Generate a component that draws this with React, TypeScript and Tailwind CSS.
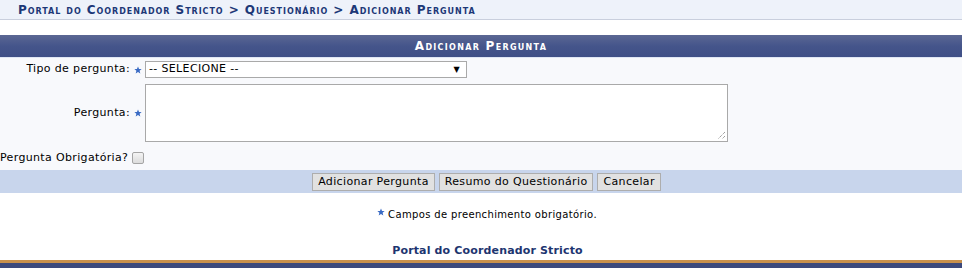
import React from "react";

const Star = () => (
  <svg width="8" height="8" viewBox="0 0 10 10" className="inline-block">
    <polygon
      points="5,0.5 6.3,3.6 9.6,3.8 7,6 7.9,9.4 5,7.5 2.1,9.4 3,6 0.4,3.8 3.7,3.6"
      fill="#3a6bc4"
    />
  </svg>
);

export default function App() {
  return (
    <div
      className="w-[962px] h-[268px] overflow-hidden bg-white text-[11px] text-black flex flex-col tracking-[0.35px]"
      style={{ fontFamily: '"DejaVu Sans", Verdana, sans-serif' }}
    >
      {/* Breadcrumb */}
      <div className="h-[20px] bg-[#eef2fa] border-b border-[#c9cfdd] flex items-center pl-[18px]">
        <span className="font-bold text-[12px] text-[#1d3877] [font-variant:small-caps] tracking-[0.95px]">
          Portal do Coordenador Stricto &gt; Questionário &gt; Adicionar Pergunta
        </span>
      </div>

      <div className="h-[15px]" />

      {/* Header */}
      <div className="h-[22px] bg-gradient-to-b from-[#5b6793] via-[#45558b] to-[#3f4f86] flex items-center justify-center">
        <span className="font-bold text-white text-[12px] [font-variant:small-caps] tracking-[1.3px]">
          Adicionar Pergunta
        </span>
      </div>
      <div className="h-[1px] bg-[#dfe6f4]" />

      {/* Form */}
      <div className="bg-[#f8f9fc] flex flex-col pt-[3px]">
        <div className="flex items-center h-[17px]">
          <div className="w-[145px] flex items-center justify-end pr-[3px] gap-[4px]">
            <span>Tipo de pergunta:</span>
            <Star />
          </div>
          <div className="w-[322px] h-[17px] bg-white border border-[#a9a9a9] flex items-center justify-between pl-[3px] pr-[6px]">
            <span>-- SELECIONE --</span>
            <span className="text-[8px]">▼</span>
          </div>
        </div>

        <div className="flex items-center h-[58px] mt-[6px]">
          <div className="w-[145px] flex items-center justify-end pr-[3px] gap-[4px]">
            <span>Pergunta:</span>
            <Star />
          </div>
          <div className="w-[583px] h-[58px] bg-white border border-[#a9a9a9] relative">
            <svg
              width="9"
              height="9"
              viewBox="0 0 9 9"
              className="absolute right-[1px] bottom-[1px]"
            >
              <line x1="8" y1="1" x2="1" y2="8" stroke="#777" strokeWidth="1" strokeDasharray="1 1" />
              <line x1="8" y1="5" x2="5" y2="8" stroke="#777" strokeWidth="1" strokeDasharray="1 1" />
            </svg>
          </div>
        </div>

        <div className="flex items-center h-[28px] pt-[4px]">
          <span>Pergunta Obrigatória?</span>
          <div className="ml-[4px] w-[12px] h-[12px] rounded-[2px] border border-[#a5a5a5] bg-gradient-to-b from-[#f4f4f4] to-[#dcdcdc]" />
        </div>
      </div>

      {/* Buttons bar */}
      <div className="h-[23px] bg-[#c8d5ec] flex items-center justify-center gap-[4px] pl-[11px]">
        <button className="h-[18px] px-[5px] bg-[#e1e1e1] border border-[#adadad] text-[11px] leading-none">
          Adicionar Pergunta
        </button>
        <button className="h-[18px] px-[5px] bg-[#e1e1e1] border border-[#adadad] text-[11px] leading-none">
          Resumo do Questionário
        </button>
        <button className="h-[18px] px-[5px] bg-[#e1e1e1] border border-[#adadad] text-[11px] leading-none">
          Cancelar
        </button>
      </div>

      {/* Note */}
      <div className="h-[14px]" />
      <div className="flex items-center justify-center gap-[3px] text-[10px] pl-[12px]">
        <span className="relative top-[-3px]">
          <Star />
        </span>
        <span>Campos de preenchimento obrigatório.</span>
      </div>

      <div className="flex-1" />

      {/* Footer */}
      <div className="flex justify-center pb-[1px] pl-[13px]">
        <span className="font-bold text-[#1d3570] text-[11px] tracking-[0.15px]">
          Portal do Coordenador Stricto
        </span>
      </div>
      <div className="h-[3px] bg-[#c8914c]" />
      <div className="h-[5px] bg-[#3c4a7c]" />
    </div>
  );
}
